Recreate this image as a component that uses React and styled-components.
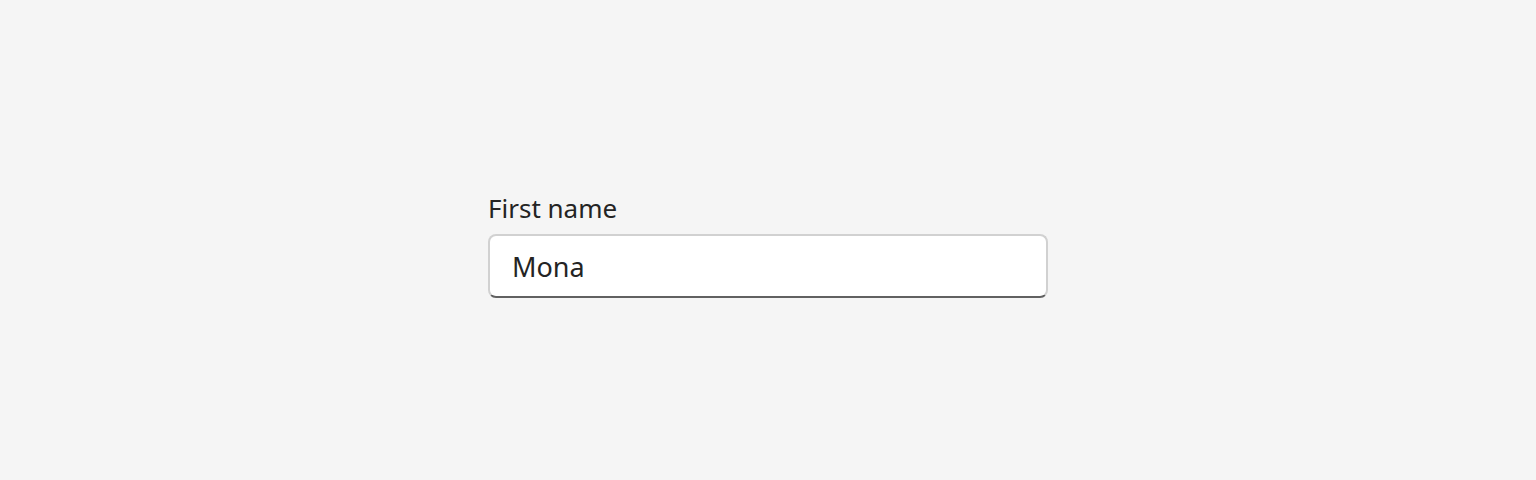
import React, { useState } from 'react';
import styled, { createGlobalStyle } from 'styled-components';

const GlobalStyle = createGlobalStyle`
  html, body {
    margin: 0;
    padding: 0;
    background: #f5f5f5;
  }
  body {
    font-family: "Noto Sans", "Open Sans", sans-serif;
    color: #242424;
  }
`;

const Page = styled.main`
  min-height: 480px;
  display: flex;
  justify-content: center;
  align-items: center;
  padding-top: 6px;
  box-sizing: border-box;
`;

const Field = styled.div`
  display: flex;
  flex-direction: column;
  width: 560px;
`;

const Label = styled.label`
  font-size: 26px;
  line-height: 40px;
  margin-bottom: 6px;
  color: #242424;
`;

const InputWrap = styled.span`
  display: flex;
  align-items: center;
  height: 64px;
  box-sizing: border-box;
  padding: 0 22px;
  background: #ffffff;
  border: 2px solid #d1d1d1;
  border-bottom-color: #616161;
  border-radius: 8px;
`;

const Input = styled.input`
  flex: 1;
  min-width: 0;
  border: none;
  outline: none;
  background: transparent;
  padding: 0;
  font-family: "Noto Sans", "Open Sans", sans-serif;
  font-size: 27px;
  color: #242424;
`;

export default function App() {
  const [name, setName] = useState('Mona');
  return (
    <>
      <GlobalStyle />
      <Page>
        <Field>
          <Label htmlFor="first-name">First name</Label>
          <InputWrap>
            <Input id="first-name" value={name} onChange={(e) => setName(e.target.value)} />
          </InputWrap>
        </Field>
      </Page>
    </>
  );
}
